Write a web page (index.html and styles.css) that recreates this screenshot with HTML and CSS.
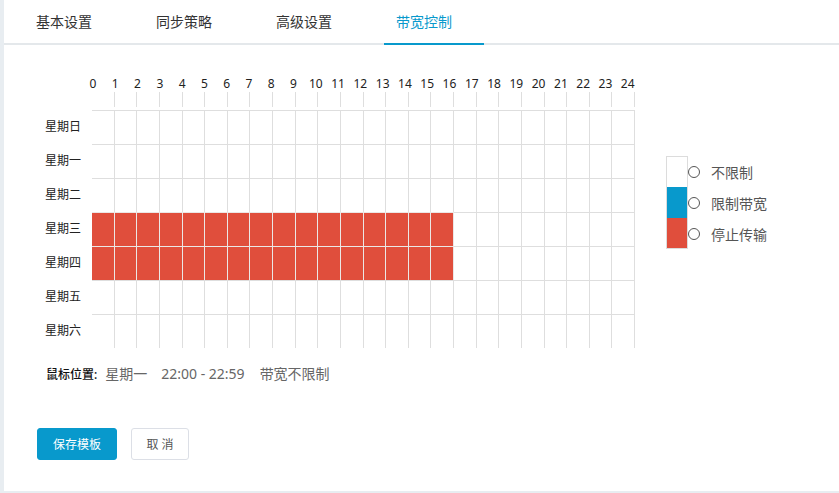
FILE: index.html
```html
<!DOCTYPE html>
<html lang="zh-CN">
<head>
<meta charset="utf-8">
<title>带宽控制</title>
<link rel="stylesheet" href="styles.css">
</head>
<body>
<div class="panel">
  <div class="tabs">
    <div class="tab">基本设置</div>
    <div class="tab">同步策略</div>
    <div class="tab">高级设置</div>
    <div class="tab active">带宽控制</div>
  </div>
  <div class="content">
    <div class="sched">
      <div class="board">
        <div class="hours">
          <span>0</span><span>1</span><span>2</span><span>3</span><span>4</span><span>5</span><span>6</span><span>7</span><span>8</span><span>9</span><span>10</span><span>11</span><span>12</span><span>13</span><span>14</span><span>15</span><span>16</span><span>17</span><span>18</span><span>19</span><span>20</span><span>21</span><span>22</span><span>23</span><span>24</span>
        </div>
        <div class="ticks">
          <i></i><i></i><i></i><i></i><i></i><i></i><i></i><i></i><i></i><i></i><i></i><i></i><i></i><i></i><i></i><i></i><i></i><i></i><i></i><i></i><i></i><i></i><i></i><i></i>
        </div>
        <div class="day-row">
          <div class="day-label">星期日</div>
          <div class="cells"><i></i><i></i><i></i><i></i><i></i><i></i><i></i><i></i><i></i><i></i><i></i><i></i><i></i><i></i><i></i><i></i><i></i><i></i><i></i><i></i><i></i><i></i><i></i><i></i></div>
        </div>
        <div class="day-row">
          <div class="day-label">星期一</div>
          <div class="cells"><i></i><i></i><i></i><i></i><i></i><i></i><i></i><i></i><i></i><i></i><i></i><i></i><i></i><i></i><i></i><i></i><i></i><i></i><i></i><i></i><i></i><i></i><i></i><i></i></div>
        </div>
        <div class="day-row">
          <div class="day-label">星期二</div>
          <div class="cells"><i></i><i></i><i></i><i></i><i></i><i></i><i></i><i></i><i></i><i></i><i></i><i></i><i></i><i></i><i></i><i></i><i></i><i></i><i></i><i></i><i></i><i></i><i></i><i></i></div>
        </div>
        <div class="day-row">
          <div class="day-label">星期三</div>
          <div class="cells"><i class="r"></i><i class="r"></i><i class="r"></i><i class="r"></i><i class="r"></i><i class="r"></i><i class="r"></i><i class="r"></i><i class="r"></i><i class="r"></i><i class="r"></i><i class="r"></i><i class="r"></i><i class="r"></i><i class="r"></i><i class="r"></i><i></i><i></i><i></i><i></i><i></i><i></i><i></i><i></i></div>
        </div>
        <div class="day-row">
          <div class="day-label">星期四</div>
          <div class="cells"><i class="r"></i><i class="r"></i><i class="r"></i><i class="r"></i><i class="r"></i><i class="r"></i><i class="r"></i><i class="r"></i><i class="r"></i><i class="r"></i><i class="r"></i><i class="r"></i><i class="r"></i><i class="r"></i><i class="r"></i><i class="r"></i><i></i><i></i><i></i><i></i><i></i><i></i><i></i><i></i></div>
        </div>
        <div class="day-row">
          <div class="day-label">星期五</div>
          <div class="cells"><i></i><i></i><i></i><i></i><i></i><i></i><i></i><i></i><i></i><i></i><i></i><i></i><i></i><i></i><i></i><i></i><i></i><i></i><i></i><i></i><i></i><i></i><i></i><i></i></div>
        </div>
        <div class="day-row">
          <div class="day-label">星期六</div>
          <div class="cells"><i></i><i></i><i></i><i></i><i></i><i></i><i></i><i></i><i></i><i></i><i></i><i></i><i></i><i></i><i></i><i></i><i></i><i></i><i></i><i></i><i></i><i></i><i></i><i></i></div>
        </div>
      </div>
      <div class="legend">
        <div class="legend-item">
          <span class="swatch sw-free"></span><span class="radio"></span><span class="legend-text">不限制</span>
        </div>
        <div class="legend-item">
          <span class="swatch sw-limit"></span><span class="radio"></span><span class="legend-text">限制带宽</span>
        </div>
        <div class="legend-item">
          <span class="swatch sw-stop"></span><span class="radio"></span><span class="legend-text">停止传输</span>
        </div>
      </div>
    </div>
    <div class="mouse-pos">
      <span class="mp-label">鼠标位置:</span><span class="mp-val v1">星期一</span><span class="mp-val v2">22:00 - 22:59</span><span class="mp-val v3">带宽不限制</span>
    </div>
    <div class="actions">
      <button class="btn btn-primary">保存模板</button>
      <button class="btn btn-default">取 消</button>
    </div>
  </div>
</div>
</body>
</html>
```
FILE: styles.css
```css
* { box-sizing: border-box; }
html, body { margin: 0; padding: 0; }
body {
  background: #e8edf1;
  font-family: "Noto Sans", "Noto Sans CJK SC", sans-serif;
  color: #303133;
  width: 839px;
  height: 493px;
  overflow: hidden;
}
.panel {
  margin-left: 4px;
  height: 491px;
  background: #fff;
}
.tabs {
  display: flex;
  gap: 20px;
  padding-left: 20px;
  height: 45px;
  border-bottom: 2px solid #e4e8eb;
}
.tab {
  width: 100px;
  height: 45px;
  line-height: 43px;
  padding-left: 12px;
  text-align: left;
  font-size: 14px;
  color: #333;
  border-bottom: 2px solid transparent;
  flex: none;
}
.tab.active {
  color: #0899cc;
  border-bottom-color: #0899cc;
}
.content {
  padding: 31px 0 0 32px;
}
.sched {
  display: flex;
  align-items: flex-start;
}
.board {
  width: 599px;
  flex: none;
}
.hours {
  display: flex;
  margin-left: 45.85px;
  height: 16px;
  line-height: 16px;
  font-size: 12px;
  color: #222;
}
.hours span {
  width: 22.29px;
  flex: none;
  text-align: center;
  white-space: nowrap;
}
.ticks {
  margin-left: 56px;
  display: grid;
  grid-template-columns: repeat(24, 22.625px);
  height: 15px;
  margin-bottom: 3px;
}
.ticks i {
  border-right: 1px solid #dedede;
}
.day-row {
  display: flex;
  height: 34px;
}
.day-label {
  width: 56px;
  flex: none;
  padding-right: 11px;
  text-align: right;
  font-size: 12px;
  line-height: 34px;
  color: #222;
}
.cells {
  display: grid;
  grid-template-columns: repeat(24, 22.625px);
}
.cells i {
  border-top: 1px solid #dedede;
  border-right: 1px solid #dedede;
  background: #fff;
}
.cells i.r {
  background: #e04e3c;
  border-color: #ebe7e6;
}
.legend {
  margin-left: 31px;
  margin-top: 80px;
  display: flex;
  flex-direction: column;
}
.legend-item {
  display: flex;
  align-items: center;
  height: 31px;
}
.swatch {
  width: 22px;
  height: 31px;
  border-left: 1px solid #dcdcdc;
  border-right: 1px solid #dcdcdc;
  flex: none;
}
.sw-free { background: #fff; border-top: 1px solid #dcdcdc; }
.sw-limit { background: #0899cc; }
.sw-stop { background: #e04e3c; border-bottom: 1px solid #dcdcdc; }
.radio {
  width: 12px;
  height: 12px;
  border: 1px solid #555;
  border-radius: 50%;
  background: #fff;
  flex: none;
}
.legend-text {
  margin-left: 11px;
  font-size: 14px;
  color: #555;
  white-space: nowrap;
}
.mouse-pos {
  margin-top: 16px;
  margin-left: 10px;
  height: 20px;
  line-height: 20px;
  display: flex;
  align-items: baseline;
  white-space: nowrap;
}
.mp-label {
  font-size: 12px;
  color: #111;
  font-weight: 500;
}
.mp-val {
  font-size: 14px;
  color: #666;
}
.v1 { margin-left: 8px; }
.v2 { margin-left: 14px; }
.v3 { margin-left: 15px; }
.actions {
  margin-top: 44px;
  margin-left: 1px;
  display: flex;
  gap: 14px;
}
.btn {
  height: 32px;
  border-radius: 3px;
  font-family: "Noto Sans", "Noto Sans CJK SC", sans-serif;
  font-size: 12px;
  padding: 0;
  cursor: pointer;
}
.btn-primary {
  width: 80px;
  background: #0899cc;
  border: 1px solid #0899cc;
  color: #fff;
}
.btn-default {
  width: 58px;
  background: #fff;
  border: 1px solid #dcdfe6;
  color: #555;
}
```
